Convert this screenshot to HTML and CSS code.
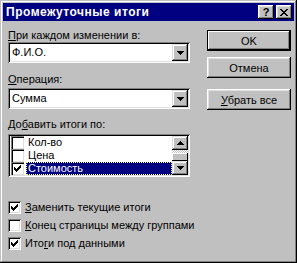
FILE: index.html
```html
<!DOCTYPE html>
<html>
<head>
  <title>Промежуточные итоги</title>
  <link rel="stylesheet" href="styles.css">
</head>
<body>
  <div class="window">
    <div class="titlebar">
      <span class="title">Промежуточные итоги</span>
      <div class="title-buttons">
        <button class="title-btn">?</button>
        <button class="title-btn">
          <svg width="8" height="7" viewBox="0 0 8 7" shape-rendering="crispEdges">
            <path d="M0 0h2v1h-2z M6 0h2v1h-2z M1 1h2v1h-2z M5 1h2v1h-2z M2 2h4v1h-4z M3 3h2v1h-2z M2 4h4v1h-4z M1 5h2v1h-2z M5 5h2v1h-2z M0 6h2v1h-2z M6 6h2v1h-2z" fill="#000"/>
          </svg>
        </button>
      </div>
    </div>

    <div class="content">
      <div class="main-row">
        <div class="left-col">
          <div class="field-label label-first"><u>П</u>ри каждом изменении в:</div>
          <div class="combo">
            <span class="combo-text">Ф.И.О.</span>
            <span class="drop-btn">
              <svg width="7" height="4" viewBox="0 0 7 4" shape-rendering="crispEdges"><path d="M0 0h7v1h-7z M1 1h5v1h-5z M2 2h3v1h-3z M3 3h1v1h-1z" fill="#000"/></svg>
            </span>
          </div>

          <div class="field-label label-op"><u>О</u>перация:</div>
          <div class="combo combo-op">
            <span class="combo-text">Сумма</span>
            <span class="drop-btn">
              <svg width="7" height="4" viewBox="0 0 7 4" shape-rendering="crispEdges"><path d="M0 0h7v1h-7z M1 1h5v1h-5z M2 2h3v1h-3z M3 3h1v1h-1z" fill="#000"/></svg>
            </span>
          </div>

          <div class="field-label label-list">До<u>б</u>авить итоги по:</div>
          <div class="listbox">
            <div class="list-items">
              <div class="list-row">
                <span class="list-check"></span>
                <span class="list-text">Кол-во</span>
              </div>
              <div class="list-row">
                <span class="list-check"></span>
                <span class="list-text">Цена</span>
              </div>
              <div class="list-row">
                <span class="list-check">
                  <svg width="13" height="13" viewBox="0 0 13 13" shape-rendering="crispEdges"><path d="M3 5h1v3h-1z M4 6h1v3h-1z M5 7h1v3h-1z M6 6h1v3h-1z M7 5h1v3h-1z M8 4h1v3h-1z M9 3h1v3h-1z" fill="#000"/></svg>
                </span>
                <span class="list-text selected">Стоимость</span>
              </div>
            </div>
            <div class="scrollbar">
              <span class="scroll-btn">
                <svg width="7" height="4" viewBox="0 0 7 4" shape-rendering="crispEdges"><path d="M3 0h1v1h-1z M2 1h3v1h-3z M1 2h5v1h-5z M0 3h7v1h-7z" fill="#000"/></svg>
              </span>
              <span class="scroll-track">
                <span class="scroll-thumb"></span>
              </span>
              <span class="scroll-btn">
                <svg width="7" height="4" viewBox="0 0 7 4" shape-rendering="crispEdges"><path d="M0 0h7v1h-7z M1 1h5v1h-5z M2 2h3v1h-3z M3 3h1v1h-1z" fill="#000"/></svg>
              </span>
            </div>
          </div>
        </div>

        <div class="right-col">
          <button class="btn btn-default">OK</button>
          <button class="btn btn-cancel">Отмена</button>
          <button class="btn btn-clear"><u>У</u>брать все</button>
        </div>
      </div>

      <div class="options">
        <div class="option">
          <span class="checkbox">
            <svg width="13" height="13" viewBox="0 0 13 13" shape-rendering="crispEdges"><path d="M3 5h1v3h-1z M4 6h1v3h-1z M5 7h1v3h-1z M6 6h1v3h-1z M7 5h1v3h-1z M8 4h1v3h-1z M9 3h1v3h-1z" fill="#000"/></svg>
          </span>
          <span class="option-text"><u>З</u>аменить текущие итоги</span>
        </div>
        <div class="option">
          <span class="checkbox"></span>
          <span class="option-text"><u>К</u>онец страницы между группами</span>
        </div>
        <div class="option">
          <span class="checkbox">
            <svg width="13" height="13" viewBox="0 0 13 13" shape-rendering="crispEdges"><path d="M3 5h1v3h-1z M4 6h1v3h-1z M5 7h1v3h-1z M6 6h1v3h-1z M7 5h1v3h-1z M8 4h1v3h-1z M9 3h1v3h-1z" fill="#000"/></svg>
          </span>
          <span class="option-text">Ито<u>г</u>и под данными</span>
        </div>
      </div>
    </div>
  </div>
</body>
</html>
```

FILE: styles.css
```css
body {
  margin: 0;
  font-family: "Liberation Sans", Arial, sans-serif;
  font-size: 11px;
  line-height: 13px;
  color: #000;
}
.window {
  width: 297px;
  height: 263px;
  box-sizing: border-box;
  padding: 3px;
  background-color: #c0c0c0;
  box-shadow: inset -1px -1px #000, inset 1px 1px #c0c0c0, inset -2px -2px #808080, inset 2px 2px #fff;
}
.titlebar {
  display: flex;
  align-items: center;
  height: 18px;
  padding: 0 2px 0 3px;
  background-color: #000080;
  color: #fff;
}
.title {
  font-weight: bold;
  font-size: 12px;
  letter-spacing: 0.5px;
}
.title-buttons {
  display: flex;
  gap: 2px;
  margin-left: auto;
}
.title-btn {
  display: flex;
  align-items: center;
  justify-content: center;
  width: 16px;
  height: 14px;
  padding: 0;
  border: none;
  background-color: #c0c0c0;
  box-shadow: inset -1px -1px #000, inset 1px 1px #fff, inset -2px -2px #808080, inset 2px 2px #dfdfdf;
  font-family: "Liberation Sans", Arial, sans-serif;
  font-weight: bold;
  font-size: 11px;
  line-height: 14px;
  color: #000;
}
.content {
  padding: 8px 2px 0 5px;
}
.main-row {
  display: flex;
}
.left-col {
  width: 182px;
}
.field-label {
  height: 13px;
}
.label-op {
  margin-top: 10px;
  margin-bottom: 2px;
}
.label-list {
  margin-top: 9px;
  margin-bottom: 3px;
}
.combo {
  display: flex;
  align-items: center;
  height: 21px;
  box-sizing: border-box;
  padding: 2px;
  background-color: #fff;
  box-shadow: inset 1px 1px #808080, inset -1px -1px #fff, inset 2px 2px #000, inset -2px -2px #dfdfdf;
}
.combo-text {
  flex-grow: 1;
  padding-left: 2px;
}
.drop-btn {
  display: flex;
  align-items: center;
  justify-content: center;
  width: 16px;
  height: 17px;
  background-color: #c0c0c0;
  box-shadow: inset -1px -1px #000, inset 1px 1px #dfdfdf, inset -2px -2px #808080, inset 2px 2px #fff;
}
.listbox {
  display: flex;
  height: 43px;
  box-sizing: border-box;
  padding: 2px;
  background-color: #fff;
  box-shadow: inset 1px 1px #808080, inset -1px -1px #fff, inset 2px 2px #000, inset -2px -2px #dfdfdf;
}
.list-items {
  flex-grow: 1;
}
.list-row {
  display: flex;
  align-items: center;
  height: 13px;
}
.list-check {
  width: 13px;
  height: 13px;
  margin-left: 1px;
  box-sizing: border-box;
  background-color: #fff;
  box-shadow: inset 1px 1px #808080, inset 2px 2px #000, inset -1px -1px #dfdfdf;
}
.list-check svg,
.checkbox svg {
  display: block;
}
.list-text {
  flex-grow: 1;
  height: 13px;
  margin-left: 2px;
  padding-left: 2px;
}
.list-text.selected {
  background-color: #000080;
  color: #fff;
  outline: 1px dotted #ffff80;
  outline-offset: -1px;
}
.scrollbar {
  display: flex;
  flex-direction: column;
  width: 16px;
}
.scroll-btn {
  display: flex;
  align-items: center;
  justify-content: center;
  height: 14px;
  background-color: #c0c0c0;
  box-shadow: inset -1px -1px #000, inset 1px 1px #dfdfdf, inset -2px -2px #808080, inset 2px 2px #fff;
}
.scroll-track {
  display: flex;
  flex-direction: column;
  justify-content: flex-end;
  flex-grow: 1;
  background: repeating-conic-gradient(#fff 0 25%, #c0c0c0 0 50%) 0 0 / 2px 2px;
}
.scroll-thumb {
  height: 8px;
  background-color: #c0c0c0;
  box-shadow: inset -1px -1px #000, inset 1px 1px #fff;
}
.right-col {
  display: flex;
  flex-direction: column;
  width: 84px;
  margin-left: 17px;
  padding-top: 1px;
}
.btn {
  height: 21px;
  padding: 0;
  border: none;
  background-color: #c0c0c0;
  box-shadow: inset -1px -1px #000, inset 1px 1px #fff, inset -2px -2px #808080, inset 2px 2px #dfdfdf;
  font-family: "Liberation Sans", Arial, sans-serif;
  font-size: 11px;
  color: #000;
}
.btn-default {
  box-shadow: inset 0 0 0 1px #000, inset -2px -2px #000, inset 2px 2px #fff, inset -3px -3px #808080;
}
.btn-cancel {
  margin-top: 6px;
}
.btn-clear {
  margin-top: 11px;
}
.options {
  margin-top: 24px;
}
.option {
  display: flex;
  align-items: center;
  height: 13px;
  margin-bottom: 5px;
}
.checkbox {
  width: 13px;
  height: 13px;
  background-color: #fff;
  box-shadow: inset 1px 1px #808080, inset -1px -1px #fff, inset 2px 2px #000, inset -2px -2px #dfdfdf;
}
.option-text {
  margin-left: 4px;
}
```
